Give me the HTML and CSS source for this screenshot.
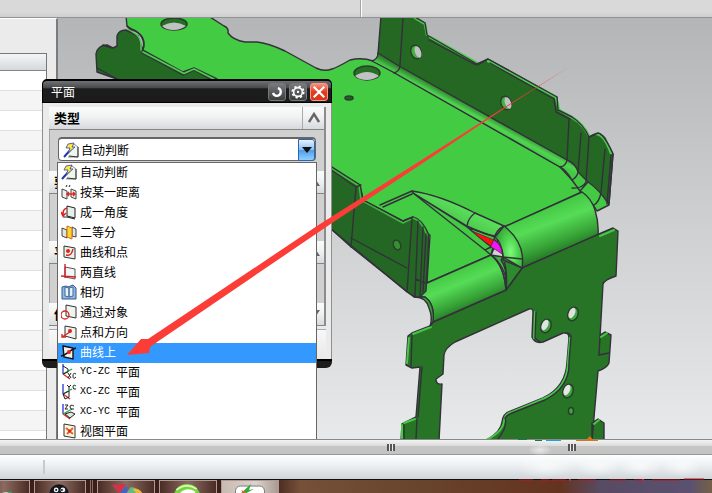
FILE: index.html
```html
<!DOCTYPE html>
<html lang="zh-CN">
<head>
<meta charset="utf-8">
<title>平面</title>
<link rel="stylesheet" href="styles.css">
</head>
<body>
<svg class="defs" aria-hidden="true">
  <defs>
    <linearGradient id="wallBend" gradientUnits="userSpaceOnUse" x1="484" y1="106" x2="476" y2="121"><stop offset="0" stop-color="#236723"/><stop offset=".35" stop-color="#2e8a2e"/><stop offset=".75" stop-color="#52d652"/><stop offset="1" stop-color="#43c943"/></linearGradient>
    <linearGradient id="bendR" gradientUnits="userSpaceOnUse" x1="543" y1="209" x2="559" y2="252"><stop offset="0" stop-color="#43c943"/><stop offset=".35" stop-color="#56dc56"/><stop offset=".8" stop-color="#35a035"/><stop offset="1" stop-color="#277c27"/></linearGradient>
    <linearGradient id="bendL" gradientUnits="userSpaceOnUse" x1="455" y1="271" x2="470" y2="308"><stop offset="0" stop-color="#43c943"/><stop offset=".35" stop-color="#56dc56"/><stop offset=".8" stop-color="#35a035"/><stop offset="1" stop-color="#277c27"/></linearGradient>
    <linearGradient id="cone" x1="0" y1="1" x2="1" y2="0"><stop offset="0" stop-color="#329b32"/><stop offset=".6" stop-color="#5be05b"/><stop offset="1" stop-color="#43c943"/></linearGradient>
    <radialGradient id="ball" cx=".62" cy=".4" r=".6"><stop offset="0" stop-color="#7dfb7d"/><stop offset=".4" stop-color="#4dd34d"/><stop offset="1" stop-color="#2c8d2c"/></radialGradient>
    <radialGradient id="smudge"><stop offset="0" stop-color="#fff" stop-opacity=".6"/><stop offset="1" stop-color="#fff" stop-opacity="0"/></radialGradient>
    <symbol id="i-auto" viewBox="0 0 16 16"><path d="M7 2h4l4 3v10H5" fill="#eef6ee" stroke="#8a908a"/><path d="M15 5v10L6 14" fill="none" stroke="#333"/><path d="M1 15l9-10" stroke="#2038a8" stroke-width="2"/><path d="M5 2l6-1-2 4h3L5 11l2-5H3z" fill="#ffe93a" stroke="#3445a5" stroke-width=".8"/></symbol>
    <symbol id="i-dist" viewBox="0 0 16 16"><path d="M1 5l5 2v8l-5-2zM10 5l5 2v8l-5-2z" fill="#e9f3e9" stroke="#444"/><path d="M5 3l1-2M8 3l1-2" stroke="#222"/><path d="M6 10h8M8 8l-2 2 2 2M12 8l2 2-2 2" fill="none" stroke="#d22" stroke-width="1.3"/></symbol>
    <symbol id="i-angle" viewBox="0 0 16 16"><path d="M6 2l8 2v10l-8-2z" fill="#e5f0e7" stroke="#222"/><path d="M2 13h4l8 2" fill="none" stroke="#222"/><path d="M6 4C2 5 2 8 2 11M0 8l2 4 3-3" fill="none" stroke="#d22" stroke-width="1.6"/></symbol>
    <symbol id="i-bisect" viewBox="0 0 16 16"><path d="M1 4l5 2v8l-5-2zM11 3l4 2v8l-4-1z" fill="#dce8dc" stroke="#444"/><path d="M6 2l5 2v11l-5-2z" fill="#ffd932" stroke="#d7651b"/></symbol>
    <symbol id="i-curvept" viewBox="0 0 16 16"><path d="M3 2l11 2v11L3 13z" fill="#e9f2e6" stroke="#333"/><path d="M5 11c5 1 6-2 7-6" fill="none" stroke="#d22" stroke-width="1.4"/><circle cx="7" cy="7" r="2" fill="#d22"/></symbol>
    <symbol id="i-lines" viewBox="0 0 16 16"><path d="M4 3l10 2v10L4 13z" fill="#f3f7f3" stroke="#555"/><path d="M4 0v14M0 12l15 1" fill="none" stroke="#d3222c" stroke-width="1.4"/></symbol>
    <symbol id="i-tangent" viewBox="0 0 16 16"><path d="M1 3l4-1 2 1 5-2 3 3v11H1z" fill="#90b6e4" stroke="#34588f"/><path d="M4 3l4 1v9l-4-1zM8 4l4-1v9l-4 1z" fill="#e4f1f9" stroke="#416a9b"/></symbol>
    <symbol id="i-through" viewBox="0 0 16 16"><path d="M5 1l10 2v11L5 12z" fill="#eff5ed" stroke="#333"/><circle cx="4" cy="11" r="4" fill="none" stroke="#d22" stroke-width="1.3"/></symbol>
    <symbol id="i-ptdir" viewBox="0 0 16 16"><path d="M4 2l11 2v11L4 12z" fill="#eff5ed" stroke="#333"/><path d="M9 8l-8 5M1 10v3h4" fill="none" stroke="#d22" stroke-width="1.4"/><circle cx="9" cy="7" r="2" fill="#d22"/></symbol>
    <symbol id="i-oncurve" viewBox="0 0 16 16"><path d="M2 2l10 2v11L3 13z" fill="#eef3ee" stroke="#111" stroke-width="1.4"/><path d="M0 12c6-1 8-6 15-8" fill="none" stroke="#111" stroke-width="1.5"/><circle cx="8" cy="8" r="2" fill="#e22"/></symbol>
    <symbol id="i-axes" viewBox="0 0 16 16"><path d="M2 0v10" stroke="#2635cf" stroke-width="1.3"/><path d="M2 10l7 5" stroke="#d22" stroke-width="1.3"/><path d="M2 10l9-5" stroke="#22a43b" stroke-width="1.3"/></symbol>
    <symbol id="i-view" viewBox="0 0 16 16"><path d="M3 1l11 2v12L3 13z" fill="#fff7e6" stroke="#333"/><path d="M5 5l7 6M12 5l-6 6" stroke="#e46821" stroke-width="2"/><circle cx="8.500" cy="8" r="1.500" fill="#d22"/></symbol>
    <symbol id="i-up" viewBox="0 0 12 12"><path d="M1 10L6 2l5 8" fill="none" stroke="#666" stroke-width="2.4"/></symbol>
  </defs>
</svg>

<header class="toolbar"><span class="toolbar-left"></span><span class="toolbar-right"></span></header>

<main class="workspace">
  <aside class="navigator"><div class="grid"><div class="grid-head"></div><div class="grid-rows"></div></div></aside>
  <section class="viewport">
    <svg class="model" viewBox="58 18 654 421" preserveAspectRatio="xMinYMin slice" role="img">
      <g stroke="#34303a" stroke-width="1.400" stroke-linejoin="round" stroke-linecap="round">
        <path fill="#236823" d="M97 72L96 54Q98 45 107 45L113 48L117 46V36Q119 30 126 30L138 36L143 50L186 73L194 68L217 79V100H150L117 79Z"/>
        <path fill="none" d="M97 68L117 79M103 45L112 48"/>
        <path fill="#43cb43" d="M126 16L127 26Q131 29 136 31Q146 38 143 50L183 72L194 68L217 79L225 150L332 167L360 185L363 200L403 221L430 235L427 283L491 255L504 227L582 192L572 180L560 167L393 72L373 61Q362 57 350 60Q338 67 332 69Q324 72 316 68L285 51Q268 43 257 42H245Q233 40 228 33Q229 28 224 26L210 17Z"/>
        <path fill="none" d="M142 53L183 75L194 70L215 82M129 31L138 36"/>
        <path fill="none" stroke="#4fcd4f" stroke-width="1.500" d="M128 29L137 35Q142 40 141 50M143 52L184 73.500L194 69L214 79"/>
        <path fill="none" d="M127 26Q129 29 135 31Q147 37 143 50"/>
        <path fill="#246824" d="M381 16L378 54L399 67L567 160L580 180L595 198L609 204L613 154L605 138Q600 132 595 134L589 137Q584 124 572 117L558 110L557 97L488 59L478 65L427 36L425 23L413 16Z"/>
        <path fill="url(#wallBend)" d="M378 53L399 66L567 160Q576 164 578 172L588 182Q600 190 609 205L597 211Q591 200 580 191L572 180Q566 170 560 167L393 72L372 61Q378 59 378 53Z"/>
        <path fill="none" stroke="#4bcf4b" stroke-width="2.600" d="M415 18L425 24L427 35M430 37L477 63M488 61L556 97L559 110L573 118Q583 124 589 136M596 134Q604 134 611 153"/>
        <path fill="none" d="M413 16L425 23L427 35L477 64L488 59L557 97L558 110L572 117Q583 124 589 137L598 133Q604 134 613 154L609 204M429 40L476 65M490 63L554 99L556 112L570 119M403 18L400 65Q400 71 394 73M569 119L567 160Q566 166 560 167M581 133L578 173M589 137L586 182Q582 189 572 188M605 149L601 193M611 155L607 204M578 173Q576 178 572 180M601 193Q599 202 594 205M580 191L588 182"/>
        <path fill="url(#bendR)" d="M504 227L582 192Q591 198 595 210Q599 223 598 235L522 268Q524 241 504 227Z"/>
        <path fill="#277427" fill-rule="evenodd" d="M433 322L506 290L522 268L599 234L613 228L618 231L616 276Q604 280 603 284L599 355L600 335L605 332L611 335L609 363Q607 368 598 371L592 441V423L598 419L604 423V441H485Q501 432 502 422Q503 413 511 411L543 398Q566 387 567 362L569 338Q569 332 563 333L543 342Q535 344 532 337L533 312Q533 308 529 309L455 342Q445 348 444 355L443 374L436 379Q436 385 442 384L439 441H401L402 424L416 417L420 367L412 368L406 365L408 336L412 333L430 326Z"/>
        <path fill="none" stroke="#46c746" stroke-width="2" d="M413 334L431 327M409 338L407 363M404 423L415 419M402 425V438M486 440Q503 432 504 421Q505 413 512 412L543 399Q568 388 568 362L570 338M535 312L534 338M600 236L614 230M601 337L607 333M594 424L599 420"/>
        <path fill="none" d="M417 419L416 439M422 367L418 417M412 335L411 366M498 439Q508 426 505 418Q507 415 512 413L545 400Q570 387 569 362L571 337Q571 333 565 333M536 312L535 338L540 342M599 355L609 353M404 425V439"/>
        <path fill="url(#bendL)" d="M427 283L491 255Q504 265 506 290L433 322Q435 304 425 297L415 297Z"/>
        <path fill="#379d37" d="M415 297Q426 297 429 308Q433 318 430 326L433 322Q435 304 425 297Z"/>
        <path fill="url(#cone)" d="M412 191Q440 195 475 213L504 226L497 235Q492 238 467 226L413 193Z"/>
        <path fill="url(#ball)" d="M504 226Q526 243 522 268L506 290Q508 268 491 255L503 257Q502 243 495 237Z"/>
        <path fill="#2c8b2c" d="M503 257L522 268L506 290Q508 270 501 260Z"/>
        <path fill="none" d="M380 205L412 191L413 193L467 227L495 237M413 193L485 250L491 255M383 207L412 194M475 213Q468 218 467 226M504 226Q496 230 494 239Q503 246 503 257L522 259M503 260L522 268M491 255Q504 265 506 290M503 257Q508 272 506 290M485 250Q490 247 493 247L491 255M467 227L491 247"/>
        <path fill="#ff1010" stroke-width=".7" d="M472 231L494 240L491 246Q480 239 472 231Z"/>
        <path fill="#f614f6" stroke-width=".7" d="M494 240Q502 245 502 254Q498 251 491 247Z"/>
        <path fill="#246724" d="M330 166L360 185L363 200L403 221L413 217Q422 219 429 235L426 291L420 297H414L350 246L330 228Z"/>
        <path fill="none" stroke="#42b742" stroke-width="1.500" d="M332 169L359 186L361 200L403 223L413 218Q422 221 427 235"/>
        <path fill="none" d="M330 169L356 187L361 185M363 200L403 221L413 217M356 187L351 247M351 238L407 268M330 228L407 292M412 218L407 292L415 297M418 221L415 296M423 227L420 297M426 234L423 292M416 279L425 283"/>
      </g>
      <g fill="#c1c2c4" stroke="#2d3c2d" stroke-width="1.500">
        <ellipse cx="174" cy="24" rx="13" ry="6" fill="#247124"/><path stroke="none" d="M162 26Q174 19 186 26Q180 30 174 30Q166 30 162 26Z"/>
        <ellipse cx="367" cy="73" rx="13" ry="7" fill="#247124"/><path stroke="none" d="M355 76Q367 68 379 76Q373 80 367 80Q359 80 355 76Z"/>
        <ellipse cx="349" cy="98" rx="4" ry="2" fill="#235e23"/>
        <ellipse cx="416" cy="52" rx="5" ry="7" transform="rotate(-20 416 52)" fill="#3db43d"/><ellipse cx="418" cy="52" rx="3" ry="6" transform="rotate(-20 418 52)" stroke="none"/>
        <ellipse cx="506" cy="103" rx="5" ry="7" transform="rotate(-20 506 103)" fill="#3db43d"/><ellipse cx="508" cy="103" rx="3" ry="6" transform="rotate(-20 508 103)" stroke="none"/>
        <ellipse cx="397" cy="245" rx="3.500" ry="5" transform="rotate(-20 397 245)" fill="#329232"/>
        <ellipse cx="546" cy="326" rx="5" ry="7" transform="rotate(20 546 326)" fill="#3da93d"/><ellipse cx="545" cy="325" rx="3" ry="5.500" transform="rotate(25 545 325)" fill="#e2e3e4" stroke="none"/>
        <ellipse cx="573" cy="314" rx="5" ry="7" transform="rotate(20 573 314)" fill="#3da93d"/><ellipse cx="572" cy="313" rx="3" ry="5.500" transform="rotate(25 572 313)" fill="#dedfe0" stroke="none"/>
        <ellipse cx="568" cy="391" rx="5" ry="7" transform="rotate(20 568 391)" fill="#3da93d"/><ellipse cx="567" cy="390" rx="3" ry="5.500" transform="rotate(25 567 390)" fill="#e5e6e7" stroke="none"/>
        <ellipse cx="571" cy="411" rx="2.500" ry="3.500" fill="#3da93d"/>
      </g>
    </svg>
  </section>

  <section class="dialog">
    <div class="dialog-title">
      <h1>平面</h1>
      <button type="button" class="tool" aria-label="重置"><svg viewBox="0 0 16 16"><path d="M9 3.500A4.500 4.500 0 1 1 3.500 9" fill="none" stroke="#fff" stroke-width="2.600"/></svg></button>
      <button type="button" class="tool" aria-label="设置"><svg viewBox="0 0 16 16"><circle cx="8" cy="8" r="6.500" fill="none" stroke="#fff" stroke-width="2" stroke-dasharray="2.600 2.500"/><circle cx="8" cy="8" r="5" fill="none" stroke="#fff" stroke-width="1.800"/><circle cx="8" cy="8" r="1.300" fill="#fff"/></svg></button>
      <button type="button" class="tool close" aria-label="关闭"><svg viewBox="0 0 16 16"><path d="M2 2l12 12M14 2L2 14" stroke="#fff" stroke-width="2.500"/></svg></button>
    </div>
    <div class="dialog-body">
      <div class="panel">
        <div class="group-head"><label for="kind">类型</label><span class="fold"><svg viewBox="0 0 12 12"><use href="#i-up"/></svg></span></div>
        <div class="group-body first">
          <div class="combo">
            <svg class="icon"><use href="#i-auto"/></svg>
            <select id="kind"><option>自动判断</option></select>
            <span class="drop"><svg viewBox="0 0 10 6"><path d="M0 0h10L5 6z" fill="#111"/></svg></span>
            <ul class="list" role="listbox">
              <li><svg class="icon"><use href="#i-auto"/></svg>自动判断</li>
              <li><svg class="icon"><use href="#i-dist"/></svg>按某一距离</li>
              <li><svg class="icon"><use href="#i-angle"/></svg>成一角度</li>
              <li><svg class="icon"><use href="#i-bisect"/></svg>二等分</li>
              <li><svg class="icon"><use href="#i-curvept"/></svg>曲线和点</li>
              <li><svg class="icon"><use href="#i-lines"/></svg>两直线</li>
              <li><svg class="icon"><use href="#i-tangent"/></svg>相切</li>
              <li><svg class="icon"><use href="#i-through"/></svg>通过对象</li>
              <li><svg class="icon"><use href="#i-ptdir"/></svg>点和方向</li>
              <li class="active"><svg class="icon"><use href="#i-oncurve"/></svg>曲线上</li>
              <li><svg class="icon" viewBox="0 0 16 16"><use href="#i-axes"/><path d="M2 2l5 3v3l-5 2" fill="none" stroke="#222"/><path d="M7 9l3 5M10 9l-3 5M15 10q-3-2-3 2t3 1" fill="none" stroke="#222"/></svg><span class="latin">YC-ZC </span>平面</li>
              <li><svg class="icon" viewBox="0 0 16 16"><use href="#i-axes"/><path d="M2 10l6-3v6l-4 2z" fill="none" stroke="#222"/><path d="M6 1l2 2 2-2M8 3v3M15 2q-3-2-3 1t3 2" fill="none" stroke="#222"/></svg><span class="latin">XC-ZC </span>平面</li>
              <li><svg class="icon" viewBox="0 0 16 16"><use href="#i-axes"/><path d="M4 10l6-2 4 2-5 4z" fill="#dce9de" stroke="#222"/><path d="M4 1h3L4 5h3M13 2q-4-2-4 1t4 2" fill="none" stroke="#222"/></svg><span class="latin">XC-YC </span>平面</li>
              <li><svg class="icon"><use href="#i-view"/></svg>视图平面</li>
            </ul>
          </div>
        </div>
        <div class="group-head"><span>要</span><span class="fold"><svg viewBox="0 0 12 12"><path d="M0 10L6 1l6 9z" fill="#666"/></svg></span></div>
        <div class="group-body second"></div>
        <div class="group-head"><span>平</span><span class="fold"><svg viewBox="0 0 12 12"><path d="M0 10L6 1l6 9z" fill="#666"/></svg></span></div>
        <div class="group-body third"></div>
        <div class="group-head"><span>偏</span><span class="fold"><svg viewBox="0 0 12 12"><path d="M0 2h12L6 11z" fill="#666"/></svg></span></div>
      </div>
      <div class="actions"></div>
    </div>
    <div class="dialog-foot"></div>
  </section>
</main>

<div class="splitter"><i class="grip"></i><i class="grip"></i></div>
<div class="status"><span class="status-cell"></span></div>
<footer class="taskbar">
  <span class="task first"><svg viewBox="0 0 52 13"><path d="M14 13Q20 3 29 3Q40 4 43 13Z" fill="#e9f5ec"/><path d="M19 9Q30 8 37 2M21 13Q30 11 38 4" stroke="#33a16a" stroke-width="2" fill="none"/></svg></span>
  <span class="task"><svg viewBox="0 0 52 13"><circle cx="25" cy="13" r="10" fill="#14151e"/><circle cx="22" cy="9" r="2.500" fill="#eee"/><circle cx="29" cy="9" r="2.500" fill="#eee"/><circle cx="22" cy="9" r="1"/><circle cx="28" cy="9" r="1"/></svg></span>
  <span class="seam"></span>
  <span class="task wide"><svg viewBox="0 0 58 13"><path d="M14 4L29 3 23 13Z" fill="#d43347"/><path d="M30 4L22 13H31Z" fill="#3e66c5"/><path d="M29 13L34 6Q43 7 46 13Z" fill="#67b784"/><path d="M36 8Q43 7 46 13H40Z" fill="#f3b62e"/></svg></span>
  <span class="task wide"><svg viewBox="0 0 58 13"><circle cx="28" cy="17" r="14" fill="#75d43e"/><path d="M20 13Q27 5 37 11L35 13Z" fill="#fff"/><path d="M17 9Q27 1 38 8" stroke="#d4f7ab" stroke-width="2" fill="none"/></svg></span>
  <span class="task wide current"><svg viewBox="0 0 58 13"><rect x="14" y="5" width="30" height="14" rx="5" fill="#fff" stroke="#777"/><path d="M19 13L30 3 28 9 33 8 24 13Z" fill="#35a936"/><path d="M20 9L27 13H22Z" fill="#f25b21"/></svg></span>
</footer>

<svg class="annotation" viewBox="0 0 712 493" preserveAspectRatio="xMinYMin meet" aria-hidden="true">
  <path fill="#fb3c37" d="M569 67L508 106 420 165 332 223 160 340 150 347 149 353 127 355 141 339 148 339 160 331 320 224 420 161 508 105Z"/>
  <path d="M518 439h9v1h-9zM535 440h7v1h-7z" fill="#17706b"/><path d="M546 440h15v1h-15z" fill="#1aa1e6"/><path d="M576 440h10l4-4 3 4h5v1h-22z" fill="#db7418"/>
  <path d="M519 480h14M541 480h8M552 480h14M578 480h18M610 480h16M634 480h10M652 480h28M684 479h20" stroke="#b91822" stroke-width="1"/>
  <path d="M569 480h2M642 480h2" stroke="#e01c27" stroke-width="2"/>
  <g fill="url(#smudge)"><ellipse cx="546" cy="467" rx="28" ry="11"/><ellipse cx="540" cy="450" rx="12" ry="6"/><ellipse cx="598" cy="467" rx="22" ry="10"/><ellipse cx="640" cy="467" rx="22" ry="10"/><ellipse cx="682" cy="467" rx="20" ry="10"/></g>
</svg>
</body>
</html>
```
FILE: styles.css
```css
* { box-sizing: border-box; }

body {
  margin: 0;
  min-height: 100vh;
  display: flex;
  flex-direction: column;
  position: relative;
  overflow: hidden;
  background: #d9d9d9;
  color: #000;
  font: 12px/20px "Noto Sans CJK SC", sans-serif;
}

.defs { position: absolute; width: 0; height: 0; }

.toolbar {
  display: flex;
  height: 18px;
  background: linear-gradient(#d9d9d9 70%, #cfcfcf);
  border-bottom: 1px solid #8f9296;
}
.toolbar-left { flex: 361; border-right: 1px solid #a5a5a5; }
.toolbar-right { flex: 351; border-left: 1px solid #fff; }

.workspace {
  flex: 1;
  display: flex;
  position: relative;
  overflow: hidden;
  min-height: 421px;
}

.navigator {
  width: 58px;
  padding-top: 34px;
  display: flex;
  background: #ebebeb;
  border-top: 1px solid #fff;
  border-right: 2px solid #7b7b7b;
}
.grid {
  width: 47px;
  display: flex;
  flex-direction: column;
  border-top: 1px solid #777;
  border-right: 1px solid #777;
}
.grid-head {
  height: 17px;
  background: linear-gradient(#f4f5f6, #d5d9dc);
  border-bottom: 1px solid #858585;
}
.grid-rows {
  flex: 1;
  background: repeating-linear-gradient(#fff 0 19px, #e0e0e0 19px 20px, #f5f5f5 20px 39px, #e0e0e0 39px 40px);
}

.viewport {
  flex: 1;
  min-width: 0;
  background: linear-gradient(#b4b5b7, #cfd0d2 50%, #e8e9eb);
}
.model { display: block; width: 100%; height: 100%; }

.dialog {
  position: absolute;
  left: 42px;
  top: 61px;
  width: 290px;
}
.dialog-title {
  display: flex;
  align-items: center;
  gap: 3px;
  height: 24px;
  padding: 0 3px 0 8px;
  background: linear-gradient(#707174, #45464a 35%, #1c1c1c 36%);
  border: 1px solid #000;
  border-top-width: 2px;
  border-radius: 5px 5px 0 0;
}
.dialog-title h1 {
  flex: 1;
  margin: 0;
  color: #fff;
  font-size: 12px;
  font-weight: 400;
}
.tool {
  width: 18px;
  height: 18px;
  padding: 1px;
  background: linear-gradient(#77797c, #3c3d3f);
  border: 1px solid #77797b;
  border-radius: 3px;
}
.tool svg { display: block; width: 14px; height: 14px; }
.close { background: linear-gradient(#f4927c, #e43b20 50%, #dc3718); border-color: #f39a88; }

.dialog-body {
  padding: 4px 5px 0 6px;
  background: #ebebec;
  border: solid #8e8e8e;
  border-width: 0 1px;
}
.panel { border-right: 2px solid #8c8c8c; background: #d0d0d0; }
.group-head {
  display: flex;
  align-items: center;
  justify-content: space-between;
  height: 23px;
  padding-left: 5px;
  background: linear-gradient(#fafbfb, #f1f3f3 45%, #d7dadd);
  border-bottom: 1px solid #858585;
  font-weight: 700;
  font-size: 13px;
}
.fold {
  display: flex;
  align-items: center;
  justify-content: center;
  width: 22px;
  height: 22px;
  border-left: 1px solid #aaa;
}
.fold svg { width: 12px; height: 12px; }
.group-body { border-left: 1px solid #a3a3a3; }
.first { height: 41px; padding: 7px 8px 0; }
.second { height: 47px; }
.third { height: 39px; }
.actions { height: 30px; margin-top: 3px; border-top: 1px solid #aaa; background: linear-gradient(#f8f8f8, #e8e8e9); }
.dialog-foot { height: 9px; background: #1d1d1d; border-top: 2px solid #000; border-radius: 0 0 6px 6px; }

.combo {
  position: relative;
  display: flex;
  align-items: center;
  height: 24px;
  padding-left: 4px;
  background: #fff;
  border: 1px solid #666;
  border-top-width: 2px;
  border-radius: 4px;
}
.icon { flex: none; width: 16px; height: 16px; }
.combo select {
  flex: 1;
  min-width: 0;
  height: 20px;
  padding: 0 0 2px 2px;
  appearance: none;
  background: none;
  border: 0;
  color: #000;
  font: inherit;
}
.drop {
  display: flex;
  align-items: center;
  justify-content: center;
  width: 17px;
  height: 22px;
  background: linear-gradient(#e6f2ff, #8bbdf0 50%, #4f9be5 51%, #8fd0ff);
  border: 1px solid #2867b2;
  border-radius: 0 3px 3px 0;
}
.drop svg { width: 10px; height: 6px; }

.list {
  position: absolute;
  left: -2px;
  right: -2px;
  top: 23px;
  margin: 0;
  padding: 0;
  list-style: none;
  background: #fff;
  border: 1px solid #666;
  line-height: 16px;
}
.list li {
  display: flex;
  align-items: center;
  gap: 3px;
  height: 20px;
  padding: 0 0 3px 3px;
}
.list li:last-child { height: 18px; padding-bottom: 2px; }
.list .active { background: #39f; color: #fff; }
.latin {
  margin-right: -3px;
  font-family: "Liberation Mono", monospace;
  font-size: 10px;
  white-space: pre;
}

.splitter {
  display: flex;
  justify-content: center;
  align-items: center;
  gap: 173px;
  height: 16px;
  padding-left: 250px;
  background: linear-gradient(#f4f4f4, #dcdcdc 40%, #c6c6c7 45%, #c3c3c4);
  border-top: 1px solid #888;
  border-bottom: 1px solid #999;
  box-shadow: 0 -1px #fff;
}
.grip {
  width: 8px;
  height: 7px;
  background: repeating-linear-gradient(90deg, #555 0 2px, #eee 2px 3px);
}
.status {
  display: flex;
  align-items: center;
  height: 24px;
  background: linear-gradient(#fff, #eef1f3 40%, #cfd5da);
}
.status-cell { width: 45px; height: 14px; border-right: 2px solid #c4cbd0; }

.taskbar {
  display: flex;
  gap: 4px;
  height: 14px;
  border-top: 1px solid #111;
  background: linear-gradient(90deg, #3b1f1a 0 270px, #765038 300px, #68442d 420px, #64331f 560px, #574b63 600px, #5a5170 690px, #756044 712px);
}
.task {
  flex: none;
  width: 52px;
  height: 13px;
  border: 1px solid #b09a91;
  border-bottom: 0;
  background: linear-gradient(90deg, #4b2c25, #8b6b60, #4b2c25);
}
.task svg { display: block; width: 100%; height: 13px; }
.task.first { width: 52px; margin-left: -22px; }
.seam { width: 3px; border: solid #8e6c60; border-width: 0 1px; }
.task.wide { width: 58px; }
.task.current { background: linear-gradient(90deg, #c7bab2, #ddd3ce 60%, #a99b92); }

.annotation {
  position: absolute;
  left: 0;
  top: 0;
  width: 100%;
  height: 100%;
  pointer-events: none;
}
```
